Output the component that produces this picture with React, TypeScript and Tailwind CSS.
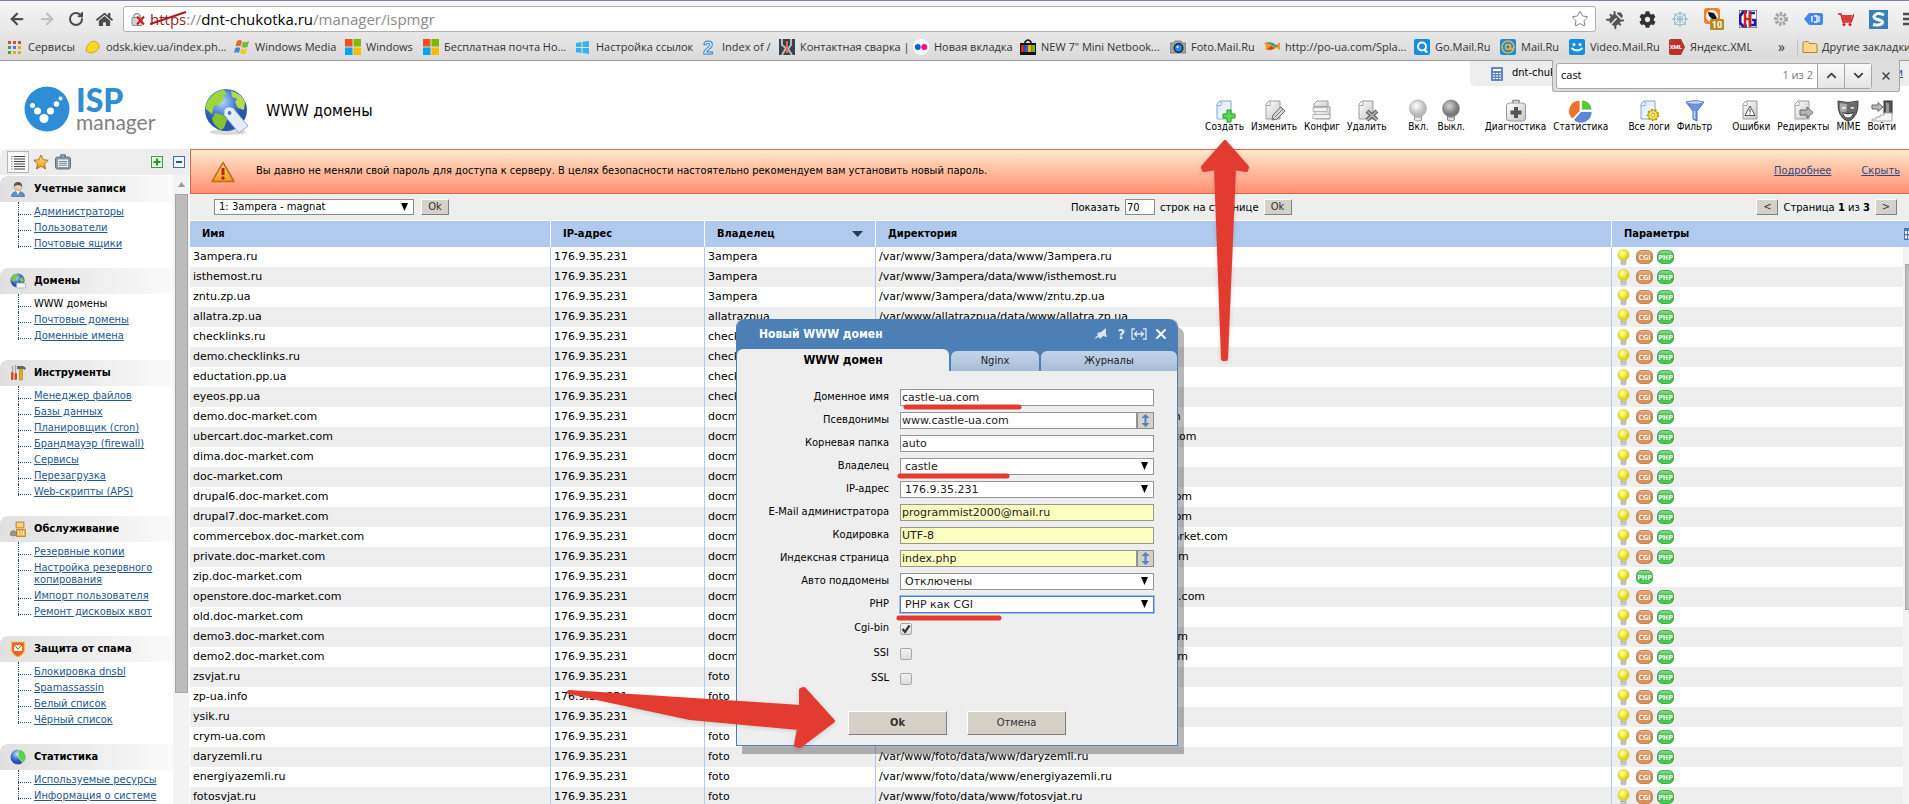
import type { ReactNode } from "react";
import { ArrowLeft, ArrowRight, ChevronDown, ChevronUp, RotateCw, Star, X } from "lucide-react";
import { FaBug, FaCog, FaHome } from "react-icons/fa";

const UI = "font-['DejaVu_Sans_Condensed','DejaVu_Sans',sans-serif]";
const WIDE = "font-['DejaVu_Sans',sans-serif]";
const CHROME = "font-['Open_Sans','Noto_Sans',sans-serif]";

/* ---------- icons ---------- */

function Svg({ size = 16, children }: { size?: number; children: ReactNode }) {
  return (
    <svg width={size} height={size} viewBox={`0 0 ${size} ${size}`} className="shrink-0" aria-hidden="true">
      {children}
    </svg>
  );
}

function Gradients() {
  return (
    <svg width="0" height="0" className="absolute" aria-hidden="true">
      <defs>
        <radialGradient id="bulbOn" cx="40%" cy="35%">
          <stop offset="0" stopColor="#ffffd0" />
          <stop offset="0.5" stopColor="#f7f432" />
          <stop offset="1" stopColor="#d8d030" />
        </radialGradient>
        <radialGradient id="bulbLight" cx="40%" cy="35%">
          <stop offset="0" stopColor="#ffffff" />
          <stop offset="1" stopColor="#b9b9b9" />
        </radialGradient>
        <radialGradient id="bulbDark" cx="40%" cy="35%">
          <stop offset="0" stopColor="#d5d5d5" />
          <stop offset="1" stopColor="#777777" />
        </radialGradient>
        <radialGradient id="sea" cx="40%" cy="30%">
          <stop offset="0" stopColor="#b9dcfb" />
          <stop offset="0.6" stopColor="#4c80d4" />
          <stop offset="1" stopColor="#2b55a8" />
        </radialGradient>
        <linearGradient id="cgi" x1="0" y1="0" x2="0" y2="1">
          <stop offset="0" stopColor="#efb48c" />
          <stop offset="0.5" stopColor="#d08048" />
          <stop offset="1" stopColor="#e09a62" />
        </linearGradient>
        <linearGradient id="php" x1="0" y1="0" x2="0" y2="1">
          <stop offset="0" stopColor="#8fe58f" />
          <stop offset="0.5" stopColor="#2fae3d" />
          <stop offset="1" stopColor="#4fd858" />
        </linearGradient>
        <linearGradient id="gold" x1="0" y1="0" x2="0" y2="1">
          <stop offset="0" stopColor="#ffe680" />
          <stop offset="1" stopColor="#e89a1c" />
        </linearGradient>
        <linearGradient id="steel" x1="0" y1="0" x2="1" y2="1">
          <stop offset="0" stopColor="#ffffff" />
          <stop offset="1" stopColor="#c6c6c6" />
        </linearGradient>
        <linearGradient id="sky" x1="0" y1="0" x2="1" y2="1">
          <stop offset="0" stopColor="#d5e6fa" />
          <stop offset="1" stopColor="#ffffff" />
        </linearGradient>
      </defs>
    </svg>
  );
}

function Bulb() {
  return (
    <svg width="13" height="17" viewBox="0 0 13 17" aria-hidden="true">
      <path d="M4 10h5v5.500q-2.500 1.500-5 0z" fill="#e2e2e6" stroke="#aaaab0" strokeWidth="0.700" />
      <path d="M4 12.500h5M4 14.300h5" stroke="#95959c" strokeWidth="0.700" />
      <circle cx="6.500" cy="6" r="5.800" fill="url(#bulbOn)" stroke="#c9c48a" strokeWidth="0.500" />
    </svg>
  );
}

function Pill({ label, fill, edge }: { label: string; fill: string; edge: string }) {
  return (
    <svg width="17" height="14" viewBox="0 0 17 14" role="img" aria-label={label}>
      <rect x="0.500" y="0.500" width="16" height="13" rx="5" fill={fill} stroke={edge} strokeWidth="0.800" />
      <text x="8.500" y="10" textAnchor="middle" fontSize="7" fontWeight="700" fill="#fff" fontFamily="DejaVu Sans Condensed, sans-serif">
        {label}
      </text>
    </svg>
  );
}

const sheet = "M7 2h11v18H4V5z";

function Sheet({ fill = "url(#steel)", edge = "#9c9c9c" }: { fill?: string; edge?: string }) {
  return (
    <>
      <path d={sheet} fill={fill} stroke={edge} />
      <path d="M4 6.500h4V2" fill="#fff" stroke={edge} strokeWidth="0.900" />
    </>
  );
}

const actionIcons: Record<string, ReactNode> = {
  create: (
    <>
      <Sheet fill="url(#sky)" edge="#86a5d4" />
      <path d="M14 11h4v4h4v4h-4v4h-4v-4h-4v-4h4z" fill="#5edb4c" stroke="#1f9a24" />
    </>
  ),
  edit: (
    <>
      <Sheet />
      <path d="M10 21l1-5 8-8 4 4-8 8z" fill="#d6d6d6" stroke="#6f6f6f" />
      <path d="M13 18l8-8M10 21l2-2" stroke="#777" />
    </>
  ),
  config: (
    <>
      <path d="M7 2h11v6H4V5z" fill="url(#steel)" stroke="#9c9c9c" />
      <path d="M5 8h15v12H5z" fill="url(#steel)" stroke="#9c9c9c" />
      <path d="M3 8.500h14v4H3zM3 15.500h17v4H3z" fill="#f4f4f4" stroke="#aaa" strokeWidth="0.800" />
    </>
  ),
  remove: (
    <>
      <Sheet />
      <path d="M12 12l10 9M22 12l-10 9" stroke="#555" strokeWidth="4" />
      <path d="M12 12l10 9M22 12l-10 9" stroke="#aaa" strokeWidth="2" />
    </>
  ),
  on: (
    <>
      <path d="M8.500 15h7v6q-3.500 2-7 0z" fill="#eee" stroke="#999" />
      <path d="M8.500 18h7" stroke="#999" />
      <circle cx="12" cy="9.500" r="8.500" fill="url(#bulbLight)" stroke="#aaa" strokeWidth="0.700" />
    </>
  ),
  off: (
    <>
      <path d="M8.500 15h7v6q-3.500 2-7 0z" fill="#ddd" stroke="#888" />
      <path d="M8.500 18h7" stroke="#888" />
      <circle cx="12" cy="9.500" r="8.500" fill="url(#bulbDark)" stroke="#888" strokeWidth="0.700" />
    </>
  ),
  diag: (
    <>
      <path d="M9 4V1.500h6V4" fill="none" stroke="#8d8d8d" strokeWidth="1.500" />
      <rect x="2.500" y="4" width="19" height="18" rx="3" fill="url(#steel)" stroke="#999" />
      <path d="M10 8h4v3.500h3.500v4H14V19h-4v-3.500H6.500v-4H10z" fill="#555" />
    </>
  ),
  stats: (
    <>
      <path d="M11 12V1.500A10.500 10.500 0 0 0 3.500 20z" fill="#f0702c" stroke="#fff" strokeWidth="0.800" />
      <path d="M12.500 11V1A10 10 0 0 1 23 11z" fill="#5cc93c" stroke="#fff" strokeWidth="0.800" />
      <path d="M12 12.500h11A11 11 0 0 1 4.500 21z" fill="#5b86d8" stroke="#fff" strokeWidth="0.800" />
    </>
  ),
  logs: (
    <>
      <Sheet fill="url(#sky)" edge="#86a5d4" />
      <circle cx="16" cy="16" r="5" fill="#f0e23c" stroke="#b89b12" strokeWidth="2.500" strokeDasharray="2 1.500" />
      <circle cx="16" cy="16" r="4.500" fill="#f3e64a" stroke="#b89b12" strokeWidth="0.800" />
      <circle cx="16" cy="16" r="1.600" fill="#fff" stroke="#a88f10" strokeWidth="0.700" />
    </>
  ),
  filter: (
    <>
      <path d="M3 3q9-2 18 0l-7 9v10l-4-2v-8z" fill="#6f95d8" stroke="#4a6fb4" />
      <ellipse cx="12" cy="3.500" rx="8.500" ry="1.700" fill="#c5d8f6" stroke="#4a6fb4" strokeWidth="0.700" />
      <path d="M11.500 12v8" stroke="#c5d8f6" strokeWidth="1.500" />
    </>
  ),
  errors: (
    <>
      <Sheet />
      <path d="M11 7l5 9.500H6z" fill="#fff" stroke="#555" />
      <path d="M11 10v3.500M11 14.500v1" stroke="#333" />
    </>
  ),
  redirects: (
    <>
      <Sheet />
      <path d="M9 11h7V8l6 5.500-6 5.500v-3H9z" fill="#b5b5b5" stroke="#666" />
    </>
  ),
  mime: (
    <>
      <path d="M2 2q10 3 20 0 1 16-10 20.500Q1 18 2 2z" fill="#6b6b6b" stroke="#444" />
      <path d="M4 4q4 1 7 1v6q-4 5-5 5-3-5-2-12z" fill="#a9a9a9" />
      <path d="M5.500 9q2.500-2 4.500 0-2.500 1.500-4.500 0zM14 9q2.500-2 4.500 0-2.500 1.500-4.500 0z" fill="#fff" />
      <path d="M6.500 13.500q5.500 3 11 0-1.500 5.500-5.500 5.500t-5.500-5.500z" fill="#fff" stroke="#222" strokeWidth="0.800" />
    </>
  ),
  login: (
    <>
      <rect x="14" y="2" width="8" height="13" fill="#555" stroke="#333" />
      <path d="M16 3.500l3 1v9h-3z" fill="#999" />
      <path d="M2 22v-2h4v-2h4v-2h4v-2h8v8z" fill="#f4f4f4" stroke="#aaa" />
      <path d="M2 6h6V3.500L13 8l-5 4.500V10H2z" fill="#bbb" stroke="#666" />
    </>
  ),
};

const bookmarkIcons: Record<string, ReactNode> = {
  apps: (
    <>
      {["#d8483e", "#d8483e", "#d8483e", "#3f9d4c", "#3f78d8", "#e8a818", "#3f9d4c", "#e8a818", "#e8a818"].map((c, i) => (
        <rect key={i} x={1 + (i % 3) * 5} y={2 + Math.floor(i / 3) * 5} width="3" height="3" fill={c} />
      ))}
    </>
  ),
  lemon: <path d="M1 12Q2 3 9 2q6 1 5 7-3 5-9 5z" fill="#f8d820" stroke="#c89a10" strokeWidth="0.800" />,
  winxp: (
    <>
      <path d="M3 2q3-2 5 0L6.500 7.500q-2-1.500-5 0z" fill="#e8632c" />
      <path d="M9 2.500q3 1.500 6-0.500L13.500 8q-3 1.500-6 0z" fill="#7ab83c" />
      <path d="M1.200 9q3-1.500 5 0L5 14q-2-1.500-5 0z" fill="#3c8ae0" />
      <path d="M7.200 9.500q3 1.500 6-0.500L12 14.500q-3 1.500-6 0z" fill="#f8c828" />
    </>
  ),
  ms: (
    <>
      <rect width="7.500" height="7.500" fill="#f25022" />
      <rect x="8.500" width="7.500" height="7.500" fill="#7fba00" />
      <rect y="8.500" width="7.500" height="7.500" fill="#00a4ef" />
      <rect x="8.500" y="8.500" width="7.500" height="7.500" fill="#ffb900" />
    </>
  ),
  win8: <path d="M1 4l5.500-1v5H1zM7.500 2.800L14 2v6H7.500zM1 9h5.500v5L1 13.200zM7.500 9H14v6l-6.500-.9z" fill="#36b4f0" />,
  two: (
    <text x="2" y="15" fontSize="18" fontWeight="700" fill="#fff" stroke="#3484c8" strokeWidth="1" fontFamily="Liberation Sans, sans-serif">
      2
    </text>
  ),
  weld: (
    <>
      <rect width="16" height="16" fill="#38404c" />
      <path d="M3 0v6l4 3-4 7M12 0v6l-3 4 4 6" stroke="#b8bcc4" strokeWidth="2" fill="none" />
      <path d="M8 2v12" stroke="#e86848" strokeWidth="2" />
    </>
  ),
  flickr: (
    <>
      <circle cx="8" cy="8" r="8" fill="#fff" />
      <circle cx="4.800" cy="8" r="3" fill="#0a62d8" />
      <circle cx="11.300" cy="8" r="3" fill="#f80c84" />
    </>
  ),
  bag: (
    <>
      <path d="M5 5V3q3-4 6 0v2" fill="none" stroke="#111" strokeWidth="1.500" />
      <rect y="4" width="16" height="12" fill="#111" />
      <rect x="1" y="6" width="3.500" height="7" fill="#d82020" />
      <rect x="4.500" y="6" width="3.500" height="7" fill="#2060d0" />
      <rect x="8" y="6" width="3.500" height="7" fill="#f0b010" />
      <rect x="11.500" y="6" width="3.500" height="7" fill="#78b020" />
    </>
  ),
  camera: (
    <>
      <path d="M0 4h4l1-2h6l1 2h4v10H0z" fill="#9ca4ac" stroke="#60686f" strokeWidth="0.700" />
      <circle cx="8.500" cy="9" r="5" fill="#22282e" />
      <circle cx="8.500" cy="9" r="3.500" fill="#2c88e8" />
      <circle cx="7.500" cy="8" r="1" fill="#fff" />
    </>
  ),
  fish: (
    <>
      <path d="M0 4q6-2 12 2l4-3v8l-4-2q-6 4-11 1 2-3-1-6z" fill="#f0a020" />
      <path d="M2 4q5-2 10 2l3 1-4 1q-4-3-9-4z" fill="#20a0a0" />
      <path d="M3 10q4 2 8-1l-4-2z" fill="#d84020" />
    </>
  ),
  search: (
    <>
      <rect width="16" height="16" rx="2" fill="#168de2" />
      <circle cx="8" cy="7.500" r="4" fill="none" stroke="#fff" strokeWidth="2" />
      <path d="M10.500 10.500l2.500 3" stroke="#fff" strokeWidth="2.500" />
    </>
  ),
  mail: (
    <>
      <rect width="16" height="16" rx="2" fill="#168de2" />
      <circle cx="8" cy="8" r="6" fill="none" stroke="#f8b428" strokeWidth="1.500" />
      <circle cx="8" cy="8" r="2.500" fill="none" stroke="#f8b428" strokeWidth="1.500" />
      <path d="M10.500 5.500v4q1.500 2 3-1" fill="none" stroke="#f8b428" strokeWidth="1.500" />
    </>
  ),
  video: (
    <>
      <rect width="16" height="16" rx="2" fill="#168de2" />
      <circle cx="5" cy="5.500" r="1.500" fill="#fff" />
      <circle cx="11" cy="5.500" r="1.500" fill="#fff" />
      <path d="M2.500 9q5.500 5 11 0" stroke="#fff" strokeWidth="1.800" fill="none" />
    </>
  ),
  xml: (
    <>
      <path d="M0 2q0-2 2-2h10l4 8-4 8H2q-2 0-2-2z" fill="#b8322e" />
      <text x="6.800" y="10.200" fontSize="6" fontWeight="700" textAnchor="middle" fill="#fff" fontFamily="Roboto, sans-serif">
        XML
      </text>
    </>
  ),
  folder: <path d="M1 4q0-1.500 1.500-1.500h3.500l1.500 2h6q1.500 0 1.500 1.500v7.500H1z" fill="#fbd88a" stroke="#a8843c" />,
};

const menuIcons: Record<string, ReactNode> = {
  user: (
    <>
      <path d="M1.500 15.500q0-5 6.500-5t6.500 5z" fill="#5f8ed2" stroke="#3f68a8" strokeWidth="0.700" />
      <path d="M6 10h4l-2 4z" fill="#fff" />
      <circle cx="8" cy="5.500" r="4" fill="#f3cfa4" stroke="#b8864c" strokeWidth="0.600" />
      <path d="M3.800 5.500Q4 1 8 1t4.200 4.500Q8 2.500 3.800 5.500z" fill="#555" />
    </>
  ),
  globe: (
    <>
      <circle cx="7.500" cy="7.500" r="7" fill="url(#sea)" />
      <path d="M3 2q4-2 5 0l-2 4-2 3-3-2q0-3 2-5zM9 6l4-2 1 4-2 2z" fill="#7dc843" />
      <rect x="6.500" y="10" width="9" height="5" rx="1" fill="#f2f6fc" stroke="#8ea6cc" strokeWidth="0.700" />
    </>
  ),
  tools: (
    <>
      <path d="M2.500 1v6M5.500 0v8" stroke="#9aa4ae" strokeWidth="1.200" />
      <rect x="1" y="7" width="2.500" height="8" rx="1" fill="#d84428" />
      <rect x="4.500" y="8" width="2.500" height="7" rx="1" fill="#d84428" />
      <path d="M7 1h6l3 2-1 2-2-1H7z" fill="#666" />
      <rect x="9.500" y="4" width="3" height="11" fill="#d8b020" stroke="#94780c" strokeWidth="0.500" />
    </>
  ),
  boxes: (
    <>
      <rect x="6" y="1" width="8" height="6" fill="#f0b444" stroke="#b87818" strokeWidth="0.700" />
      <rect x="6.500" y="8.500" width="9" height="7" fill="#f0b444" stroke="#b87818" strokeWidth="0.700" />
      <path d="M8 2v4M10 2v4M12 2v4M8.500 10v4M11 10v4M13.500 10v4" stroke="#fff3cc" />
      <path d="M0 14q0-4 3-4.500t4 4.500q-3.500 2-7 0z" fill="#a49080" stroke="#776858" strokeWidth="0.500" />
    </>
  ),
  shield: (
    <>
      <path d="M1.500 1h13v8q-1 5-6.500 7-5.500-2-6.500-7z" fill="#e8632c" stroke="#f7c040" strokeWidth="1.200" />
      <rect x="4" y="4" width="8" height="6" fill="#fff4d8" />
      <path d="M4 4l4 4 4-4" fill="none" stroke="#a85a18" />
    </>
  ),
  pie: (
    <>
      <circle cx="8" cy="8" r="7.500" fill="url(#sea)" />
      <path d="M8 8V0.500A7.500 7.500 0 0 1 13 14z" fill="#5ed050" stroke="#fff" strokeWidth="0.600" />
    </>
  ),
};

/* ---------- data ---------- */

const bookmarks = [
  { icon: "apps", label: "Сервисы", w: "w-[78px]" },
  { icon: "lemon", label: "odsk.kiev.ua/index.ph...", w: "w-[149px]" },
  { icon: "winxp", label: "Windows Media", w: "w-[111px]" },
  { icon: "ms", label: "Windows", w: "w-[78px]" },
  { icon: "ms", label: "Бесплатная почта Но...", w: "w-[152px]" },
  { icon: "win8", label: "Настройка ссылок", w: "w-[126px]" },
  { icon: "two", label: "Index of /", w: "w-[78px]" },
  { icon: "weld", label: "Контактная сварка |", w: "w-[134px]" },
  { icon: "flickr", label: "Новая вкладка", w: "w-[107px]" },
  { icon: "bag", label: 'NEW 7" Mini Netbook...', w: "w-[150px]" },
  { icon: "camera", label: "Foto.Mail.Ru", w: "w-[94px]" },
  { icon: "fish", label: "http://po-ua.com/Spla...", w: "w-[150px]" },
  { icon: "search", label: "Go.Mail.Ru", w: "w-[86px]" },
  { icon: "mail", label: "Mail.Ru", w: "w-[69px]" },
  { icon: "video", label: "Video.Mail.Ru", w: "w-[100px]" },
  { icon: "xml", label: "Яндекс.XML", w: "w-[100px]" },
];

const actionGroups = [
  [
    ["create", "Создать"],
    ["edit", "Изменить"],
    ["config", "Конфиг"],
    ["remove", "Удалить"],
  ],
  [
    ["on", "Вкл."],
    ["off", "Выкл."],
  ],
  [
    ["diag", "Диагностика"],
    ["stats", "Статистика"],
  ],
  [
    ["logs", "Все логи"],
    ["filter", "Фильтр"],
  ],
  [
    ["errors", "Ошибки"],
    ["redirects", "Редиректы"],
    ["mime", "MIME"],
    ["login", "Войти"],
  ],
];

const menu = [
  { icon: "user", title: "Учетные записи", items: ["Администраторы", "Пользователи", "Почтовые ящики"] },
  { icon: "globe", title: "Домены", items: ["WWW домены", "Почтовые домены", "Доменные имена"] },
  {
    icon: "tools",
    title: "Инструменты",
    items: ["Менеджер файлов", "Базы данных", "Планировщик (cron)", "Брандмауэр (firewall)", "Сервисы", "Перезагрузка", "Web-скрипты (APS)"],
  },
  {
    icon: "boxes",
    title: "Обслуживание",
    items: ["Резервные копии", "Настройка резервного копирования", "Импорт пользователя", "Ремонт дисковых квот"],
  },
  { icon: "shield", title: "Защита от спама", items: ["Блокировка dnsbl", "Spamassassin", "Белый список", "Чёрный список"] },
  { icon: "pie", title: "Статистика", items: ["Используемые ресурсы", "Информация о системе"] },
];

const owners: [string, string[]][] = [
  ["3ampera", ["3ampera.ru", "isthemost.ru", "zntu.zp.ua"]],
  ["allatrazpua", ["allatra.zp.ua"]],
  ["check", ["checklinks.ru", "demo.checklinks.ru", "eductation.pp.ua", "eyeos.pp.ua"]],
  [
    "docmarket",
    [
      "demo.doc-market.com",
      "ubercart.doc-market.com",
      "dima.doc-market.com",
      "doc-market.com",
      "drupal6.doc-market.com",
      "drupal7.doc-market.com",
      "commercebox.doc-market.com",
      "private.doc-market.com",
      "zip.doc-market.com",
      "openstore.doc-market.com",
      "old.doc-market.com",
      "demo3.doc-market.com",
      "demo2.doc-market.com",
    ],
  ],
  ["foto", ["zsvjat.ru", "zp-ua.info", "ysik.ru", "crym-ua.com", "daryzemli.ru", "energiyazemli.ru", "fotosvjat.ru"]],
];

const domains = owners.flatMap(([owner, names]) =>
  names.map((name) => ({ name, owner, dir: `/var/www/${owner}/data/www/${name}`, cgi: name !== "zip.doc-market.com" })),
);

type Field = { id: string; label: string; value: string; kind?: "select" | "list"; filled?: boolean; focused?: boolean };

const fields: Field[] = [
  { id: "domain", label: "Доменное имя", value: "castle-ua.com" },
  { id: "alias", label: "Псевдонимы", value: "www.castle-ua.com", kind: "list" },
  { id: "docroot", label: "Корневая папка", value: "auto" },
  { id: "owner", label: "Владелец", value: "castle", kind: "select" },
  { id: "ip", label: "IP-адрес", value: "176.9.35.231", kind: "select" },
  { id: "admin", label: "E-Mail администратора", value: "programmist2000@mail.ru", filled: true },
  { id: "charset", label: "Кодировка", value: "UTF-8", filled: true },
  { id: "index", label: "Индексная страница", value: "index.php", kind: "list", filled: true },
  { id: "autosub", label: "Авто поддомены", value: "Отключены", kind: "select" },
  { id: "php", label: "PHP", value: "PHP как CGI", kind: "select", focused: true },
];

/* ---------- browser chrome ---------- */

function BrowserBar() {
  return (
    <div className={`shrink-0 border-t border-t-[#7a83a8] border-b border-b-[#9e9e9e] bg-linear-to-b from-[#f6f6f6] to-[#dadada] ${CHROME}`}>
      <div className="flex h-[34px] items-center pt-1 pb-0.5 pl-2">
        <div className="flex w-[115px] items-center gap-3 text-[#4d4d4d]">
          <button aria-label="Назад">
            <ArrowLeft size={18} strokeWidth={3} />
          </button>
          <button aria-label="Вперёд" className="text-[#c0c0c0]">
            <ArrowRight size={18} strokeWidth={3} />
          </button>
          <button aria-label="Обновить">
            <RotateCw size={16} strokeWidth={3} />
          </button>
          <button aria-label="Домой">
            <FaHome size={17} />
          </button>
        </div>
        <div className="flex h-[26px] min-w-0 flex-1 items-center rounded-[3px] border border-[#b0b0b0] bg-white px-1.5">
          <Svg size={16}>
            <path d="M4 7V4.500q3-4 6 0V7" fill="none" stroke="#999" strokeWidth="1.500" />
            <rect x="2" y="6.500" width="10" height="8" rx="1" fill="#d2d2d2" stroke="#8a8a8a" />
            <path d="M7 5.500l7 8M14 5.500l-7 8" stroke="#c8201c" strokeWidth="2" />
          </Svg>
          <div className="relative ml-1 flex-1 text-[15px] leading-6 whitespace-nowrap text-[#8a8a8a]">
            <span className="text-[#9c1c1c]">https</span>://<span className="text-black">dnt-chukotka.ru</span>/manager/ispmgr
            <svg width="37" height="14" className="absolute top-1 left-0" aria-hidden="true">
              <path d="M0 13L36 1" stroke="#a81c1c" strokeWidth="2" />
            </svg>
          </div>
          <Star size={18} strokeWidth={1} className="text-[#555]" />
        </div>
        <div className="-mr-3 flex w-[325px] items-center justify-between pl-3 text-[#444]">
          <FaBug size={16} className="rotate-45 text-[#555]" />
          <FaCog size={17} className="text-[#333]" />
          <Svg size={18}>
            <path d="M9 1v16M1 9h16M3 3l12 12M15 3L3 15M9 3l5 2 1 4-1 5-5 1-5-1-1-5 1-4zM9 6l3 3-3 3-3-3z" fill="none" stroke="#8fb9cf" />
          </Svg>
          <svg width="20" height="24" viewBox="0 0 20 24" aria-hidden="true">
            <rect y="1" width="16" height="16" rx="3" fill="#f08030" />
            <circle cx="8" cy="9" r="6" fill="#fff" />
            <path d="M4 5l6 1 3 5-3 3-5-5z" fill="#111" />
            <rect x="6" y="12" width="14" height="11" rx="1" fill="#b88a28" />
            <text x="13" y="21" textAnchor="middle" fontSize="9" fontWeight="700" fill="#fff" fontFamily="Roboto, sans-serif">
              10
            </text>
          </svg>
          <Svg size={18}>
            <rect width="18" height="18" fill="#fff" stroke="#111a80" strokeWidth="1" />
            <path d="M8 2H4L1 6v7l3 3h4" fill="none" stroke="#1820a0" strokeWidth="3" />
            <path d="M16 3h-5v12h5v-5h-3" fill="none" stroke="#1820a0" strokeWidth="2.500" />
            <path d="M6 1v16M11 1v16M6 9h5" stroke="#d81c1c" strokeWidth="2.500" />
          </Svg>
          <Svg size={16}>
            <circle cx="8" cy="8" r="5.500" fill="none" stroke="#a4a4a4" strokeWidth="3" strokeDasharray="2.500 1.500" />
            <circle cx="8" cy="8" r="4" fill="#e2e2e2" stroke="#a4a4a4" />
            <circle cx="8" cy="8" r="1.500" fill="#a4a4a4" />
          </Svg>
          <Svg size={19}>
            <path d="M0 9l5-6h12q2 0 2 2v8q0 2-2 2H5z" fill="#4688e8" />
            <path d="M8 6v6M10 6h3v6h-3M15 6v6" stroke="#fff" strokeWidth="1.300" fill="none" />
          </Svg>
          <Svg size={16}>
            <path d="M0 3h3l2 8h8l3-8" fill="none" stroke="#d81c1c" strokeWidth="1.500" />
            <path d="M4 4h10l-1 6H5z" fill="#d83c3c" />
            <circle cx="6" cy="13.500" r="1.500" fill="#d81c1c" />
            <circle cx="12" cy="13.500" r="1.500" fill="#d81c1c" />
          </Svg>
          <Svg size={19}>
            <rect width="19" height="19" fill="#3a80b8" />
            <path d="M15 5Q9 2 6 5t3 4.500 4 4-9 1" fill="none" stroke="#fff" strokeWidth="3" />
          </Svg>
          <svg width="18" height="16" viewBox="0 0 18 16" aria-hidden="true">
            <path d="M0 3h18M0 8h18M0 13h18" stroke="#4d4d4d" strokeWidth="2.500" />
          </svg>
        </div>
      </div>
      <nav className="flex h-[25px] items-center overflow-hidden pb-0.5 pl-[7px] text-[11px] leading-4 whitespace-nowrap text-[#333]">
        {bookmarks.map((b) => (
          <a key={b.label} href="#" className={`flex shrink-0 items-center gap-[5px] ${b.w}`}>
            <Svg size={16}>{bookmarkIcons[b.icon]}</Svg>
            {b.label}
          </a>
        ))}
        <button className="ml-auto pr-3 text-sm" aria-label="Ещё закладки">
          »
        </button>
        <a href="#" className="flex w-[112px] shrink-0 items-center gap-1 border-l border-[#c4c4c4] pl-1">
          <Svg size={16}>{bookmarkIcons.folder}</Svg>
          Другие закладки
        </a>
      </nav>
    </div>
  );
}

function FindBar() {
  return (
    <div className={`absolute top-[60px] right-[9px] z-20 flex h-8 w-[348px] items-center rounded-b-[3px] border border-t-0 border-[#a8a8a8] bg-[#dedede] pl-[3px] text-[11px] ${CHROME}`}>
      <div className="flex h-[26px] flex-1 items-center rounded-[3px] border border-[#a8a8a8] bg-white">
        <input aria-label="Найти на странице" defaultValue="cast" className="min-w-0 flex-1 px-1 text-black outline-none" />
        <span className="pr-1 text-[#777]">1 из 2</span>
        <button aria-label="Предыдущее" className="flex h-full w-[27px] items-center justify-center border-l border-[#a8a8a8] bg-linear-to-b from-[#fafafa] to-[#e4e4e4] text-[#444]">
          <ChevronUp size={15} strokeWidth={3} />
        </button>
        <button aria-label="Следующее" className="flex h-full w-[27px] items-center justify-center border-l border-[#a8a8a8] bg-linear-to-b from-[#fafafa] to-[#e4e4e4] text-[#444]">
          <ChevronDown size={15} strokeWidth={3} />
        </button>
      </div>
      <button aria-label="Закрыть поиск" className="flex w-[27px] justify-center text-[#444]">
        <X size={12} strokeWidth={3} />
      </button>
    </div>
  );
}

/* ---------- panel ---------- */

function Header() {
  return (
    <header className="flex h-[88px] shrink-0 items-start justify-between bg-white">
      <div className="flex pt-[25px] pl-6">
        <a href="#" className="flex w-[178px] gap-1.5" aria-label="ISP manager">
          <svg width="46" height="46" viewBox="0 0 46 46" aria-hidden="true">
            <circle cx="23" cy="23" r="22.500" fill="#2f8dd6" />
            <g fill="#fff">
              <circle cx="8.500" cy="19.500" r="2.500" />
              <circle cx="13.500" cy="25" r="3.500" />
              <circle cx="20" cy="32.500" r="4.500" />
              <circle cx="26.500" cy="25" r="3.500" />
              <circle cx="32.500" cy="18" r="2.800" />
              <circle cx="36.500" cy="12.500" r="2" />
            </g>
          </svg>
          <span className="flex flex-col font-['Lato',sans-serif]">
            <span className="text-[32px] leading-7 font-black text-[#2f8dd6]">ISP</span>
            <span className="text-[21px] leading-4 text-[#808080]">manager</span>
          </span>
        </a>
        <div className="flex h-[50px] items-center gap-4">
          <svg width="48" height="50" viewBox="0 0 48 50" aria-hidden="true">
            <ellipse cx="26" cy="46" rx="18" ry="3" fill="#000" opacity="0.150" />
            <circle cx="24" cy="24" r="21" fill="url(#sea)" />
            <path d="M9 11Q15 4 22 4l3 4-5 2 2 4-6 5-4 1-2 8-6-5Q3 17 9 11z" fill="#9fd63a" />
            <path d="M29 5q10 2 14 11l-1 8-6-2-3-6 2-3-5-2z" fill="#b3dc48" />
            <path d="M13 27l8 2 4 5-3 8-3 2q-7-4-9-11z" fill="#84c42e" />
            <path d="M22 24q3-5 9-2l15 18-9 7-15-18z" fill="#e4eefa" stroke="#93acd4" />
            <circle cx="27.500" cy="27" r="2.500" fill="#4a74bc" stroke="#fff" />
          </svg>
          <h1 className="text-base leading-6 text-black">WWW домены</h1>
        </div>
      </div>
      <div className="flex w-[439px] flex-col items-end overflow-visible">
        <div className="flex h-[25px] w-full shrink-0 items-center gap-2 rounded-bl-md bg-[#ededed] pr-1.5 pl-5 text-[11px]">
          <Svg size={14}>
            <rect x="1" width="12" height="14" rx="1" fill="#5f86c8" />
            <rect x="3" y="2" width="8" height="2" fill="#fff" />
            <path d="M3 6.500h8M3 9h8M3 11.500h8" stroke="#fff" strokeDasharray="2 1" />
          </Svg>
          <span>dnt-chukotka.ru</span>
          <a href="#" className="ml-auto text-[#1f4f99] underline">
            и
          </a>
        </div>
        <div className="flex gap-5 pt-[13px] pr-[13px] text-[10px]">
          {actionGroups.map((group, i) => (
            <div key={i} className="flex gap-[7px]">
              {group.map(([icon, label]) => (
                <button key={icon} className="flex flex-col items-center leading-4 whitespace-nowrap">
                  <Svg size={24}>{actionIcons[icon]}</Svg>
                  <span className="-mt-1">{label}</span>
                </button>
              ))}
            </div>
          ))}
        </div>
      </div>
    </header>
  );
}

function Sidebar() {
  return (
    <aside className="flex w-[190px] shrink-0 flex-col overflow-hidden pr-px">
      <div className="flex h-[26px] shrink-0 items-center gap-1 rounded-tl-lg bg-[#ededed] pr-1 pl-[7px]">
        <button aria-label="Список" className="flex h-[22px] w-[22px] items-center justify-center border border-[#b4b4b4] bg-[#f8f8f8]">
          <Svg size={16}>
            <path d="M4 2.500h11M4 5h11M4 7.500h11M4 10h11M4 12.500h11M4 15h11" stroke="#444" />
            <path d="M1 2.500h1.500M1 5h1.500M1 7.500h1.500M1 10h1.500M1 12.500h1.500M1 15h1.500" stroke="#888" />
          </Svg>
        </button>
        <button aria-label="Избранное">
          <Svg size={16}>
            <path d="M8 1l2.200 4.700 5 .6-3.700 3.500 1 5L8 12.300l-4.500 2.500 1-5L.8 6.300l5-.6z" fill="url(#gold)" stroke="#a8701c" />
          </Svg>
        </button>
        <button aria-label="Буфер" className="pl-0.5">
          <Svg size={16}>
            <path d="M6 3V1h4v2" fill="none" stroke="#6a7680" strokeWidth="1.500" />
            <rect x="0.500" y="3" width="15" height="12" rx="2" fill="#8c9aa8" stroke="#66727e" />
            <rect x="3" y="5.500" width="10" height="7.500" fill="#e8edf2" />
            <path d="M4 7.500h8M4 9.300h8M4 11.200h8" stroke="#7c8894" />
          </Svg>
        </button>
        <button aria-label="Развернуть" className="mr-1.5 ml-auto">
          <Svg size={12}>
            <rect x="0.500" y="0.500" width="11" height="11" fill="#e2f5e2" stroke="#3da044" />
            <path d="M6 2.500v7M2.500 6h7" stroke="#2a9432" strokeWidth="2" />
          </Svg>
        </button>
        <button aria-label="Свернуть">
          <Svg size={12}>
            <rect x="0.500" y="0.500" width="11" height="11" fill="#f2f6fc" stroke="#4a6aa4" />
            <path d="M3 6h6" stroke="#34548e" strokeWidth="2" />
          </Svg>
        </button>
      </div>
      <div className="flex min-h-0 flex-1">
        <nav className="min-w-0 flex-1 overflow-hidden pt-px">
          {menu.map((group) => (
            <section key={group.title}>
              <h2 className="flex h-[26px] items-center gap-2 rounded-tl-lg bg-linear-to-r from-[#e0e0e0] to-[#fafafa] pl-2.5 text-[11px] font-bold text-black">
                <Svg size={16}>{menuIcons[group.icon]}</Svg>
                {group.title}
              </h2>
              <ul className="pt-0.5 pb-4 pl-[18px]">
                {group.items.map((item, i) => (
                  <li key={item} className="relative pl-4 text-[11px] leading-3">
                    <span
                      className={`absolute left-0 w-px border-l border-dotted border-[#1f4f7c] ${i === 0 ? "-top-0.5" : "top-0"} ${i === group.items.length - 1 ? "h-3" : "bottom-0"}`}
                    />
                    <span className="absolute top-2.5 left-0 w-[13px] border-t border-dotted border-[#1f4f7c]" />
                    {item === "WWW домены" ? (
                      <span className="block py-0.5">{item}</span>
                    ) : (
                      <a href="#" className="block py-0.5 text-[#23588f] underline">
                        {item}
                      </a>
                    )}
                  </li>
                ))}
              </ul>
            </section>
          ))}
        </nav>
        <div className="flex w-4 flex-col items-center bg-[#f3f3f3]">
          <svg width="7" height="5" className="my-[7px] shrink-0" aria-hidden="true">
            <path d="M0 5l3.500-5L7 5z" fill="#9a9a9a" />
          </svg>
          <div className="h-[499px] w-[13px] shrink-0 border border-[#a6a6a6] bg-[#bcbcbc]" />
        </div>
      </div>
    </aside>
  );
}

const flatButton = "border border-t-white border-l-white border-r-[#808080] border-b-[#808080] bg-[#d5d1c8] text-[#333]";

function Triangle() {
  return (
    <svg width="7" height="8" viewBox="0 0 7 8" className="pointer-events-none absolute top-1 right-1.5" aria-hidden="true">
      <path d="M0 0h7L3.500 8z" fill="#000" />
    </svg>
  );
}

function Notice() {
  return (
    <div className="flex h-[45px] shrink-0 items-center border border-r-0 border-[#d9694c] bg-linear-to-b from-[#ffe8cc] to-[#ff8f70] pr-[9px] pl-5 text-[11px] whitespace-nowrap">
      <Svg size={24}>
        <path d="M12 2.500L23 21.500H1z" fill="url(#gold)" stroke="#c8691c" strokeWidth="1.500" strokeLinejoin="round" />
        <path d="M12 8v7" stroke="#c81818" strokeWidth="3" />
        <circle cx="12" cy="18" r="1.700" fill="#c81818" />
      </Svg>
      <p className="flex-1 pl-[21px] text-black">
        Вы давно не меняли свой пароль для доступа к серверу. В целях безопасности настоятельно рекомендуем вам установить новый пароль.
      </p>
      <a href="#" className="mr-[30px] text-[#2d4a86] underline">
        Подробнее
      </a>
      <a href="#" className="text-[#2d4a86] underline">
        Скрыть
      </a>
    </div>
  );
}

function Pager() {
  return (
    <div className={`flex h-[26px] shrink-0 items-center bg-[#eeeeee] pr-3 pl-6 text-[10px] whitespace-nowrap ${WIDE}`}>
      <div className="flex flex-5 items-center gap-[7px]">
        <div className="relative w-[200px]">
          <select aria-label="Фильтр" className="h-4 w-full appearance-none border border-[#8c8c8c] bg-white px-1 leading-3">
            <option>1: 3ampera - magnat</option>
          </select>
          <Triangle />
        </div>
        <button className={`h-4 w-7 leading-3 ${flatButton}`}>Ok</button>
      </div>
      <div className="flex flex-4 items-center gap-[5px]">
        <label htmlFor="rows">Показать</label>
        <input id="rows" defaultValue="70" className="h-4 w-[30px] border border-[#8c8c8c] bg-white px-px" />
        <span>строк на странице</span>
        <button className={`h-4 w-7 leading-3 ${flatButton}`}>Ok</button>
      </div>
      <div className="flex items-center gap-[5px]">
        <button className={`h-4 w-[22px] leading-3 ${flatButton}`}>&lt;</button>
        <span>
          Страница <b>1</b> из <b>3</b>
        </span>
        <button className={`h-4 w-[22px] leading-3 ${flatButton}`}>&gt;</button>
      </div>
    </div>
  );
}

function DomainTable() {
  return (
    <div className="flex min-h-0 flex-1 overflow-hidden border-t border-white">
      <table className={`h-fit w-full table-fixed border-separate border-spacing-0 text-[11px] ${WIDE}`}>
        <colgroup>
          <col className="w-[360px]" />
          <col className="w-[154px]" />
          <col className="w-[171px]" />
          <col />
          <col className="w-[292px]" />
        </colgroup>
        <thead>
          <tr className={`h-[26px] bg-[#b0caee] text-left ${UI}`}>
            <th className="pl-3">Имя</th>
            <th className="border-l border-white pl-3">IP-адрес</th>
            <th className="border-l border-white pr-3 pl-3">
              <span className="flex items-center justify-between">
                Владелец
                <svg width="11" height="6" aria-hidden="true">
                  <path d="M0 0h11L5.500 6z" fill="#2e3a5c" />
                </svg>
              </span>
            </th>
            <th className="border-l border-white pl-3">Директория</th>
            <th className="border-l border-white pl-3">Параметры</th>
          </tr>
        </thead>
        <tbody>
          {domains.map((d) => (
            <tr key={d.name} className="h-5 whitespace-nowrap odd:bg-white even:bg-[#eeeeee]">
              <td className="pl-[3px]">{d.name}</td>
              <td className="border-l border-[#b0caee] pl-[3px]">176.9.35.231</td>
              <td className="border-l border-[#b0caee] pl-[3px]">{d.owner}</td>
              <td className="border-l border-[#b0caee] pl-[3px]">{d.dir}</td>
              <td className="border-l border-[#b0caee] pl-[5px]">
                <span className="flex items-center gap-1">
                  <span className="pr-0.5">
                    <Bulb />
                  </span>
                  {d.cgi && <Pill label="CGI" fill="url(#cgi)" edge="#b8703c" />}
                  <Pill label="PHP" fill="url(#php)" edge="#2c9438" />
                </span>
              </td>
            </tr>
          ))}
        </tbody>
      </table>
      <div className="w-1.5 shrink-0 bg-[#f3f3f3]">
        <div className="flex h-[26px] items-center justify-end bg-[#b0caee]">
          <svg width="5" height="12" aria-hidden="true">
            <rect width="6" height="12" fill="#4a74b8" />
            <path d="M1 3h2v3H1zM1 7.500h2v3H1zM4 3h1v3H4zM4 7.500h1v3H4z" fill="#fff" />
          </svg>
        </div>
        <div className="mt-[17px] ml-0.5 h-[346px] border border-r-0 border-[#a6a6a6] bg-[#bcbcbc]" />
      </div>
    </div>
  );
}

/* ---------- dialog ---------- */

function FieldRow({ field }: { field: Field }) {
  const box = `h-[17px] w-full border px-px text-[11px] leading-[15px] text-[#222] outline-none ${WIDE} ${
    field.filled ? "bg-[#faffbd]" : "bg-white"
  } ${field.focused ? "border-[#4c7fd0] ring-1 ring-[#9dbcf0]" : "border-[#969696]"}`;
  return (
    <div className="flex h-[23px] items-center">
      <label htmlFor={field.id} className="w-[152px] pr-[11px] text-right">
        {field.label}
      </label>
      <div className="relative flex flex-1">
        {field.kind === "select" ? (
          <>
            <select id={field.id} className={`appearance-none pl-1 ${box}`}>
              <option>{field.value}</option>
            </select>
            <Triangle />
          </>
        ) : (
          <input id={field.id} defaultValue={field.value} className={box} />
        )}
        {field.kind === "list" && (
          <button
            type="button"
            aria-label={`${field.label}: развернуть`}
            className="flex h-[17px] w-[17px] shrink-0 items-center justify-center border border-[#8c8c8c] bg-[#d5d1c8]"
          >
            <svg width="9" height="13" viewBox="0 0 9 13" aria-hidden="true">
              <path d="M4.500 0L8.500 4h-3v5h3l-4 4-4-4h3V4h-3z" fill="#5580c8" />
            </svg>
          </button>
        )}
      </div>
    </div>
  );
}

function CheckRow({ id, label, checked }: { id: string; label: string; checked?: boolean }) {
  return (
    <div className="flex h-[25px] items-center">
      <label htmlFor={id} className="w-[152px] pr-[11px] text-right">
        {label}
      </label>
      <span className="relative flex">
        <input
          id={id}
          type="checkbox"
          defaultChecked={checked}
          className="peer h-3 w-3 appearance-none rounded-xs border border-[#a8a8a8] bg-linear-to-b from-[#f2f2f2] to-[#dcdcdc]"
        />
        <svg width="12" height="12" className="pointer-events-none absolute top-0 left-0 hidden peer-checked:block" aria-hidden="true">
          <path d="M2.500 6l2.500 3L9.500 2.500" fill="none" stroke="#333" strokeWidth="2.200" />
        </svg>
      </span>
    </div>
  );
}

function DomainDialog() {
  const tab = "flex h-5 items-center justify-center rounded-t-md bg-linear-to-b from-[#c3d4e8] to-[#a6bdd6] text-[#222]";
  return (
    <div
      role="dialog"
      aria-labelledby="dialog-title"
      className="absolute top-[319px] left-[736px] z-10 w-[442px] rounded-t-lg border-x border-b border-[#4b7fb6] bg-[#eeeeee] text-[11px] shadow-[6px_8px_0_rgba(0,0,0,0.28)]"
    >
      <div className="rounded-t-lg bg-[#4b7fb6]">
        <div className="flex h-[30px] items-center justify-between pr-2 pl-[22px] text-white">
          <h2 id="dialog-title" className="text-xs font-bold">
            Новый WWW домен
          </h2>
          <div className="flex items-center gap-1.5">
            <button aria-label="Закрепить" className="pr-1">
              <Svg size={14}>
                <path d="M0 12l4-4-1-2 4-1 5-4v6l1 3-4-1-3 3-1-2z" fill="#d8e6f4" />
              </Svg>
            </button>
            <button aria-label="Справка" className="text-sm font-bold text-[#e4eef8]">
              ?
            </button>
            <button aria-label="Ширина">
              <svg width="16" height="12" viewBox="0 0 16 12" aria-hidden="true">
                <path d="M4 1H1v10h3M12 1h3v10h-3M3.500 6h9M6 3.500L3.500 6 6 8.500M10 3.500L12.500 6 10 8.500" fill="none" stroke="#d8e6f4" strokeWidth="1.300" />
              </svg>
            </button>
            <button aria-label="Закрыть">
              <X size={16} strokeWidth={3} />
            </button>
          </div>
        </div>
        <div role="tablist" className="flex items-end gap-0.5">
          <button role="tab" aria-selected="true" className="flex h-[22px] w-[212px] items-center justify-center rounded-t-md bg-[#eeeeee] text-xs font-bold text-black">
            WWW домен
          </button>
          <button role="tab" aria-selected="false" className={`w-[88px] ${tab}`}>
            Nginx
          </button>
          <button role="tab" aria-selected="false" className={`flex-1 ${tab}`}>
            Журналы
          </button>
        </div>
      </div>
      <form className="pt-[15px] pb-2.5" onSubmit={(e) => e.preventDefault()}>
        <div className="pr-[23px] pl-[11px]">
          {fields.map((f) => (
            <FieldRow key={f.id} field={f} />
          ))}
          <CheckRow id="cgibin" label="Cgi-bin" checked />
          <CheckRow id="ssi" label="SSI" />
          <CheckRow id="ssl" label="SSL" />
        </div>
        <div className="mt-5 flex justify-center gap-5">
          <button type="submit" className={`h-6 w-[99px] font-bold ${flatButton}`}>
            Ok
          </button>
          <button type="button" className={`h-6 w-[99px] ${flatButton}`}>
            Отмена
          </button>
        </div>
      </form>
    </div>
  );
}

/* Red pen marks that lead through the steps */
function Marks() {
  return (
    <svg width="1909" height="804" className="pointer-events-none absolute top-0 left-0 z-30" aria-hidden="true">
      <g fill="#e23b30" stroke="#e23b30" strokeLinejoin="round" className="drop-shadow-sm">
        <path d="M1225 142L1247 167L1246 170L1234 168L1226 359H1223L1216 168L1204 170L1203 167Z" strokeWidth="4" />
        <path d="M569 692L801 707L801 690L804 689L833 721L800 746L796 745L799 728L690 718Z" strokeWidth="4" />
      </g>
      <path d="M906 407h113M900 476h107M899 618h100" stroke="#e23b30" strokeWidth="5" strokeLinecap="round" />
    </svg>
  );
}

export default function App() {
  return (
    <div className={`relative flex h-screen flex-col overflow-hidden bg-white text-black ${UI}`}>
      <Gradients />
      <BrowserBar />
      <FindBar />
      <Header />
      <div className="flex min-h-0 flex-1">
        <Sidebar />
        <main className="flex min-w-0 flex-1 flex-col">
          <Notice />
          <Pager />
          <DomainTable />
        </main>
      </div>
      <DomainDialog />
      <Marks />
    </div>
  );
}
